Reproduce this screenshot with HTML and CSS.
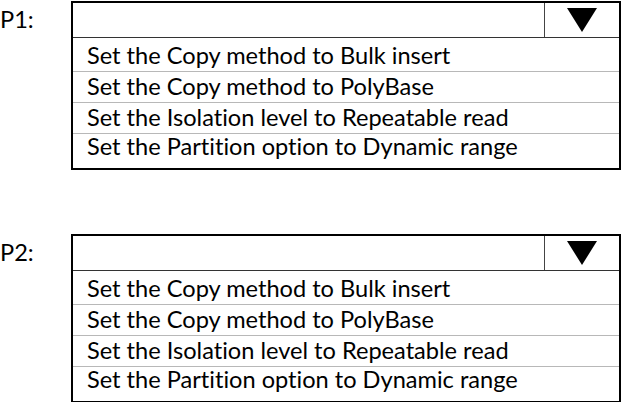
FILE: index.html
```html
<!DOCTYPE html>
<html lang="en">
<head>
  <meta charset="UTF-8" />
  <title>Dropdown answers</title>
  <link rel="stylesheet" href="styles.css">
</head>
<body>
  <div class="preguntas">

    <!-- P1 -->
    <div class="pregunta">
      <div class="etiqueta">P1:</div>
      <div class="caja">
        <div class="cabecera">
          <div class="valor"></div>
          <div class="flecha">
            <svg width="30" height="24" viewBox="0 0 30 24"><polygon points="0,0 30,0 15,24" fill="#000"/></svg>
          </div>
        </div>
        <ul class="opciones">
          <li>Set the Copy method to Bulk insert</li>
          <li>Set the Copy method to PolyBase</li>
          <li>Set the Isolation level to Repeatable read</li>
          <li>Set the Partition option to Dynamic range</li>
        </ul>
      </div>
    </div>

    <!-- P2 -->
    <div class="pregunta">
      <div class="etiqueta">P2:</div>
      <div class="caja">
        <div class="cabecera">
          <div class="valor"></div>
          <div class="flecha">
            <svg width="30" height="24" viewBox="0 0 30 24"><polygon points="0,0 30,0 15,24" fill="#000"/></svg>
          </div>
        </div>
        <ul class="opciones">
          <li>Set the Copy method to Bulk insert</li>
          <li>Set the Copy method to PolyBase</li>
          <li>Set the Isolation level to Repeatable read</li>
          <li>Set the Partition option to Dynamic range</li>
        </ul>
      </div>
    </div>

  </div>
</body>
</html>
```

FILE: styles.css
```css
body {
  margin: 0;
  background: #fff;
  color: #000;
  font-family: Lato, "Open Sans", sans-serif;
  font-size: 23.6px;
  font-variant-ligatures: none;
}

.preguntas {
  display: flex;
  flex-direction: column;
  gap: 64px;
  padding-top: 1px;
}

.pregunta {
  display: flex;
}

.etiqueta {
  width: 71px;
  height: 37px;
  line-height: 36px;
}

.caja {
  width: 550px;
  box-sizing: border-box;
  border: 2px solid #000;
}

.cabecera {
  display: flex;
  height: 34px;
  border-bottom: 1px solid #333;
}

.valor {
  flex: 1;
}

.flecha {
  width: 74px;
  border-left: 1px solid #444;
  display: flex;
  align-items: center;
  justify-content: center;
}

.opciones {
  list-style: none;
  margin: 0;
  padding: 0;
}

.opciones li {
  box-sizing: border-box;
  height: 31px;
  line-height: 28px;
  padding-left: 14px;
  border-top: 1px solid #b8b8b8;
}

.opciones li:first-child {
  height: 33px;
  padding-top: 3px;
  border-top: none;
}

.opciones li:last-child {
  height: 35px;
  line-height: 24px;
}
```
